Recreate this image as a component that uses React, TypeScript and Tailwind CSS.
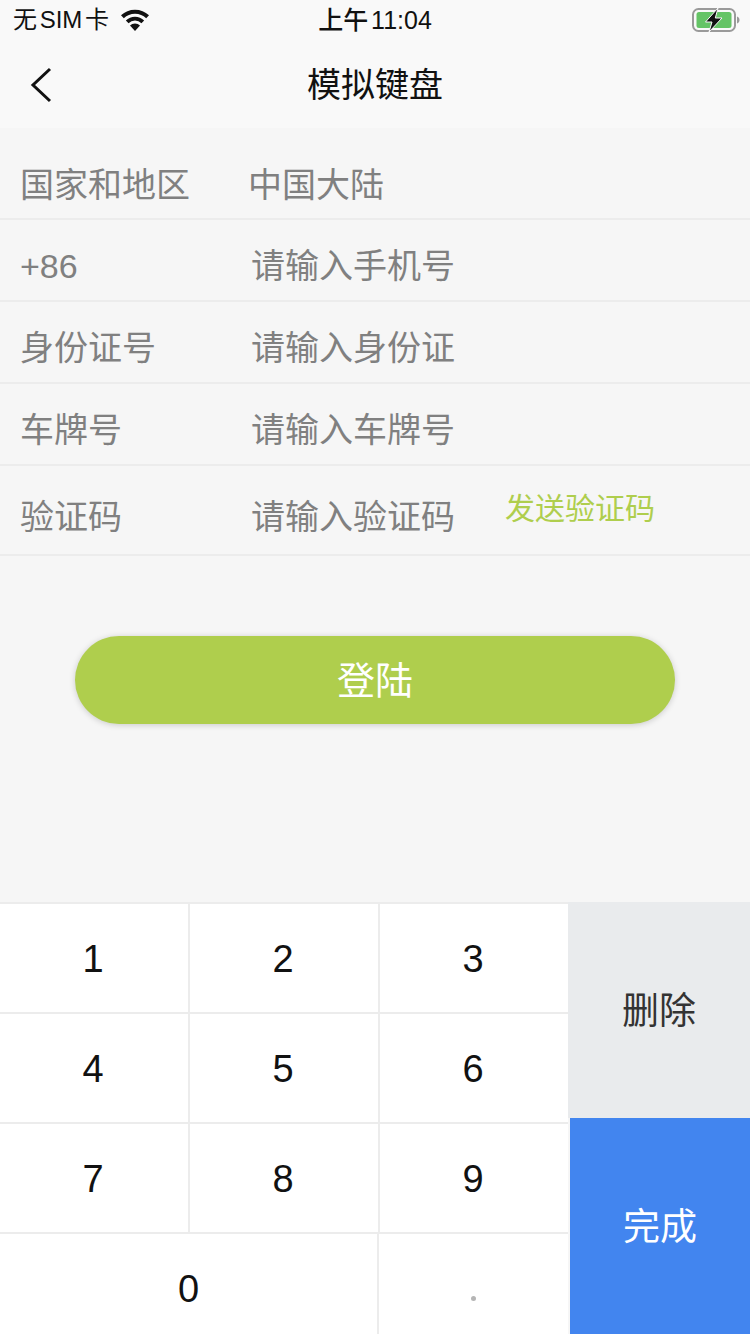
const CJK = "font-['Liberation_Sans','Noto_Sans_CJK_SC',sans-serif]";

const ROWS = [
  { label: "国家和地区", value: "中国大陆", cls: "h-[92px] pt-[24px]", inset: "w-[248px]" },
  { label: "+86", value: "请输入手机号", cls: "h-[82px] pt-[12px]", inset: "w-[251px]" },
  { label: "身份证号", value: "请输入身份证", cls: "h-[82px] pt-[12px]", inset: "w-[251px]" },
  { label: "车牌号", value: "请输入车牌号", cls: "h-[82px] pt-[12px]", inset: "w-[251px]" },
];

function StatusBar() {
  return (
    <div className="flex h-[40px] items-center justify-between bg-[#f9f9f9] pl-[13px] pr-[10px] text-[24px] leading-none text-[#111]">
      <div className="flex w-[200px] items-center gap-[11px]">
        <span className="[word-spacing:-4px]">无 SIM 卡</span>
        <svg width="30" height="22" viewBox="0 0 30 22">
          <path d="M15 22l-5-5.400a7 7 0 0 1 10 0L15 22z" fill="#111" />
          <path d="M7.200 12.800a11 11 0 0 1 15.600 0" fill="none" stroke="#111" strokeWidth="3.800" />
          <path d="M2.400 7.800a18 18 0 0 1 25.200 0" fill="none" stroke="#111" strokeWidth="4" />
        </svg>
      </div>
      <span className="text-[25px] font-medium [word-spacing:-4px]">上午 11:04</span>
      <div className="flex w-[203px] justify-end">
        <svg width="48" height="24" viewBox="0 0 48 24">
          <rect x="1" y="1" width="42" height="22" rx="5.500" fill="none" stroke="#9a9a9a" strokeWidth="2" />
          <rect x="4.500" y="4" width="35" height="16" rx="2.500" fill="#65c466" />
          <path d="M45 8.500v7c1.500-.4 2.500-1.800 2.500-3.500S46.500 8.900 45 8.500z" fill="#9a9a9a" />
          <path d="M26 0L13.500 14h6.500l-3 10L30 10h-6.700z" fill="#111" stroke="#f9f9f9" strokeWidth="1" />
        </svg>
      </div>
    </div>
  );
}

function NavBar() {
  return (
    <div className="relative flex h-[88px] items-center justify-center bg-[#f9f9f9] text-[34px] leading-none text-[#111]">
      <svg className="absolute left-[30px] top-[27px]" width="24" height="36" viewBox="0 0 24 36">
        <path d="M20 2L3 18l17 16" fill="none" stroke="#111" strokeWidth="3" />
      </svg>
      <span className="pt-[2px]">模拟键盘</span>
    </div>
  );
}

function Row({ label, value, cls, inset }: { label: string; value: string; cls: string; inset: string }) {
  return (
    <div className={`flex items-center border-b-2 border-[#ececec] text-[34px] leading-none text-[#808080] ${cls}`}>
      <span className={`pl-[20px] ${inset}`}>{label}</span>
      <span>{value}</span>
    </div>
  );
}

function Key({ label, cls }: { label: string; cls: string }) {
  return (
    <div className={`flex h-[110px] items-center justify-center border-t-2 border-[#ececec] bg-white pt-[2px] text-[38px] leading-none text-[#111] ${cls}`}>
      <span>{label}</span>
    </div>
  );
}

function Keypad() {
  const grid = ["1", "2", "3", "4", "5", "6", "7", "8", "9"];
  return (
    <div className="mt-auto flex h-[432px]">
      <div className="w-[568px]">
        <div className="grid grid-cols-[190px_190px_188px]">
          {grid.map((n, i) => (
            <Key key={n} label={n} cls={i % 3 < 2 ? "border-r-2 pr-[2px]" : "pr-[2px]"} />
          ))}
        </div>
        <div className="grid grid-cols-[379px_189px]">
          <Key label="0" cls="border-r-2" />
          <div className="flex h-[110px] justify-center border-t-2 border-[#ececec] bg-white pt-[62px]">
            <span className="h-[5px] w-[5px] rounded-full bg-[#b5b5b5]" />
          </div>
        </div>
      </div>
      <div className="flex w-[182px] flex-col">
        <div className="flex h-[216px] items-center justify-center bg-[#e9ebed] pt-[2px] text-[37px] leading-none text-[#333]">删除</div>
        <div className="ml-[2px] flex flex-1 items-center justify-center bg-[#4285ef] pt-[2px] text-[37px] leading-none text-white">完成</div>
      </div>
    </div>
  );
}

export default function App() {
  return (
    <div className={`flex h-[1334px] w-[750px] flex-col overflow-hidden bg-[#f6f6f6] ${CJK}`}>
      <StatusBar />
      <NavBar />
      {ROWS.map((r) => (
        <Row key={r.label} {...r} />
      ))}
      <div className="flex h-[90px] items-center border-b-2 border-[#ececec] text-[34px] leading-none text-[#808080]">
        <span className="w-[251px] pl-[20px] pt-[14px]">验证码</span>
        <span className="w-[254px] pt-[14px]">请输入验证码</span>
        <span className="-mt-[2px] text-[30px] text-[#afce4d]">发送验证码</span>
      </div>
      <div className="mx-[75px] mt-[80px] flex h-[88px] items-center justify-center rounded-[44px] bg-[#afce4d] pt-[2px] text-[38px] leading-none text-white shadow-[0_1px_6px_rgba(0,0,0,0.18)]">
        登陆
      </div>
      <Keypad />
    </div>
  );
}
